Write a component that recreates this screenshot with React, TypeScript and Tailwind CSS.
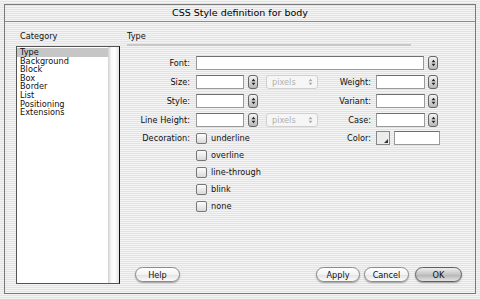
import React from "react";

const Stepper = () => (
  <div className="w-[10px] h-[14px] shrink-0 rounded-[3px] border border-[#666] bg-[linear-gradient(#f4f4f4,#b8b8b8)] flex items-center justify-center">
    <svg width="5" height="8" viewBox="0 0 5 8">
      <path d="M2.5 0.8 L4.4 3.2 L0.6 3.2Z M2.5 7.2 L4.4 4.8 L0.6 4.8Z" fill="#222" />
    </svg>
  </div>
);

const Input = ({ w }: { w: string }) => (
  <div className={`${w} h-[14px] shrink-0 bg-white border border-[#9a9a9a] border-t-[#6f6f6f]`} />
);

const Pixels = () => (
  <div className="w-[52px] h-[14px] shrink-0 rounded-[3px] border border-[#d0d0d0] bg-[#f6f6f6] flex items-center pl-[5px] pr-[4px] text-[#b0b0b0]">
    <span>pixels</span>
    <svg className="ml-auto" width="5" height="8" viewBox="0 0 5 8">
      <path d="M2.5 0.8 L4.4 3.2 L0.6 3.2Z M2.5 7.2 L4.4 4.8 L0.6 4.8Z" fill="#aaa" />
    </svg>
  </div>
);

const Check = ({ label }: { label: string }) => (
  <div className="flex items-center h-[17px]">
    <div className="w-[11px] h-[11px] shrink-0 rounded-[2px] border border-[#777] bg-[linear-gradient(#fdfdfd,#d9d9d9)]" />
    <span className="ml-[4px]">{label}</span>
  </div>
);

const Label = ({ children, w }: { children: React.ReactNode; w: string }) => (
  <div className={`${w} shrink-0 text-right`}>{children}</div>
);

const Btn = ({ label, w, def }: { label: string; w: string; def?: boolean }) => (
  <div
    className={`${w} h-[15px] rounded-full flex items-center justify-center shadow-[0_1px_1.5px_rgba(0,0,0,0.35)] ${
      def
        ? "border border-[#5e5e5e] bg-[linear-gradient(#eeeeee,#c4c4c4_50%,#b2b2b2_51%,#e2e2e2)]"
        : "border border-[#8a8a8a] bg-[linear-gradient(#ffffff,#f3f3f3_50%,#e2e2e2_51%,#fbfbfb)]"
    }`}
  >
    {label}
  </div>
);

const items = ["Type", "Background", "Block", "Box", "Border", "List", "Positioning", "Extensions"];

export default function App() {
  return (
    <div className="w-[480px] h-[299px] overflow-hidden bg-[image:repeating-linear-gradient(180deg,#f4f4f4_0px,#f4f4f4_1px,#e3e3e3_1px,#e3e3e3_2px)] pt-[4px] pl-[4px] font-['DejaVu_Sans',sans-serif] text-[8.2px] leading-[10px] text-[#111]">
      <div className="w-[472px] h-[290px] border border-[#7a7a7a] flex flex-col">
        <div className="h-[17px] shrink-0 border-b border-[#8a8a8a] flex items-center justify-center text-[9.5px] leading-[12px] text-[#000]">
          CSS Style definition for body
        </div>
        <div className="flex-1 flex pl-[11px]">
          {/* Left column */}
          <div className="w-[104px] flex flex-col pb-[9px]">
            <div className="mt-[9px] pl-[4px] h-[10px]">Category</div>
            <div className="mt-[5px] flex-1 flex border-t border-b border-l border-[#555] border-r border-r-[#111]">
              <div className="flex-1 bg-white pt-[1px]">
                {items.map((it, i) => (
                  <div
                    key={it}
                    className={`h-[8.6px] leading-[8.6px] pl-[3px] ${i === 0 ? "bg-[#c6c6c6]" : ""}`}
                  >
                    {it}
                  </div>
                ))}
              </div>
              <div className="w-[11px] bg-[linear-gradient(90deg,#cfcfcf,#f8f8f8_30%,#ffffff_60%,#e4e4e4)]" />
            </div>
          </div>
          {/* Right column */}
          <div className="ml-[7px] flex-1 flex flex-col pr-[13px] pb-[11px]">
            <div className="mt-[9px] h-[10px]">Type</div>
            <div className="mt-[3px] w-[284px] h-[2px] bg-[#c8c8c8]" />
            <div className="mt-[7px] flex flex-col">
              <div className="h-[19px] flex items-center">
                <Label w="w-[63px]">Font:</Label>
                <div className="ml-[6px]"><Input w="w-[228px]" /></div>
                <div className="ml-[4px]"><Stepper /></div>
              </div>
              <div className="h-[19px] flex items-center">
                <Label w="w-[63px]">Size:</Label>
                <div className="ml-[6px]"><Input w="w-[48px]" /></div>
                <div className="ml-[4px]"><Stepper /></div>
                <div className="ml-[8px]"><Pixels /></div>
                <Label w="w-[53px]">Weight:</Label>
                <div className="ml-[5px]"><Input w="w-[49px]" /></div>
                <div className="ml-[3px]"><Stepper /></div>
              </div>
              <div className="h-[19px] flex items-center">
                <Label w="w-[63px]">Style:</Label>
                <div className="ml-[6px]"><Input w="w-[48px]" /></div>
                <div className="ml-[4px]"><Stepper /></div>
                <div className="ml-[8px] w-[52px]" />
                <Label w="w-[53px]">Variant:</Label>
                <div className="ml-[5px]"><Input w="w-[49px]" /></div>
                <div className="ml-[3px]"><Stepper /></div>
              </div>
              <div className="h-[19px] flex items-center">
                <Label w="w-[63px]">Line Height:</Label>
                <div className="ml-[6px]"><Input w="w-[48px]" /></div>
                <div className="ml-[4px]"><Stepper /></div>
                <div className="ml-[8px]"><Pixels /></div>
                <Label w="w-[53px]">Case:</Label>
                <div className="ml-[5px]"><Input w="w-[49px]" /></div>
                <div className="ml-[3px]"><Stepper /></div>
              </div>
              <div className="flex items-start mt-[0.5px]">
                <div className="w-[191px] shrink-0 flex">
                  <Label w="w-[63px]"><div className="h-[17px] flex items-center justify-end">Decoration:</div></Label>
                  <div className="ml-[6px] flex flex-col">
                    <Check label="underline" />
                    <Check label="overline" />
                    <Check label="line-through" />
                    <Check label="blink" />
                    <Check label="none" />
                  </div>
                </div>
                <div className="h-[17px] flex items-center">
                  <Label w="w-[53px]">Color:</Label>
                  <div className="ml-[5px] relative w-[14px] h-[14px] border border-[#888] bg-[#ececec]">
                    <div className="absolute right-[1px] bottom-[1px] w-0 h-0 border-l-[4px] border-l-transparent border-b-[4px] border-b-[#333]" />
                  </div>
                  <div className="ml-[4px]"><Input w="w-[46px]" /></div>
                </div>
              </div>
            </div>
            <div className="flex-1" />
            <div className="flex items-center">
              <div className="ml-[8px]"><Btn label="Help" w="w-[45px]" /></div>
              <div className="flex-1" />
              <Btn label="Apply" w="w-[44px]" />
              <div className="ml-[4px]"><Btn label="Cancel" w="w-[45px]" /></div>
              <div className="ml-[6px]"><Btn label="OK" w="w-[47px]" def /></div>
            </div>
          </div>
        </div>
      </div>
    </div>
  );
}
